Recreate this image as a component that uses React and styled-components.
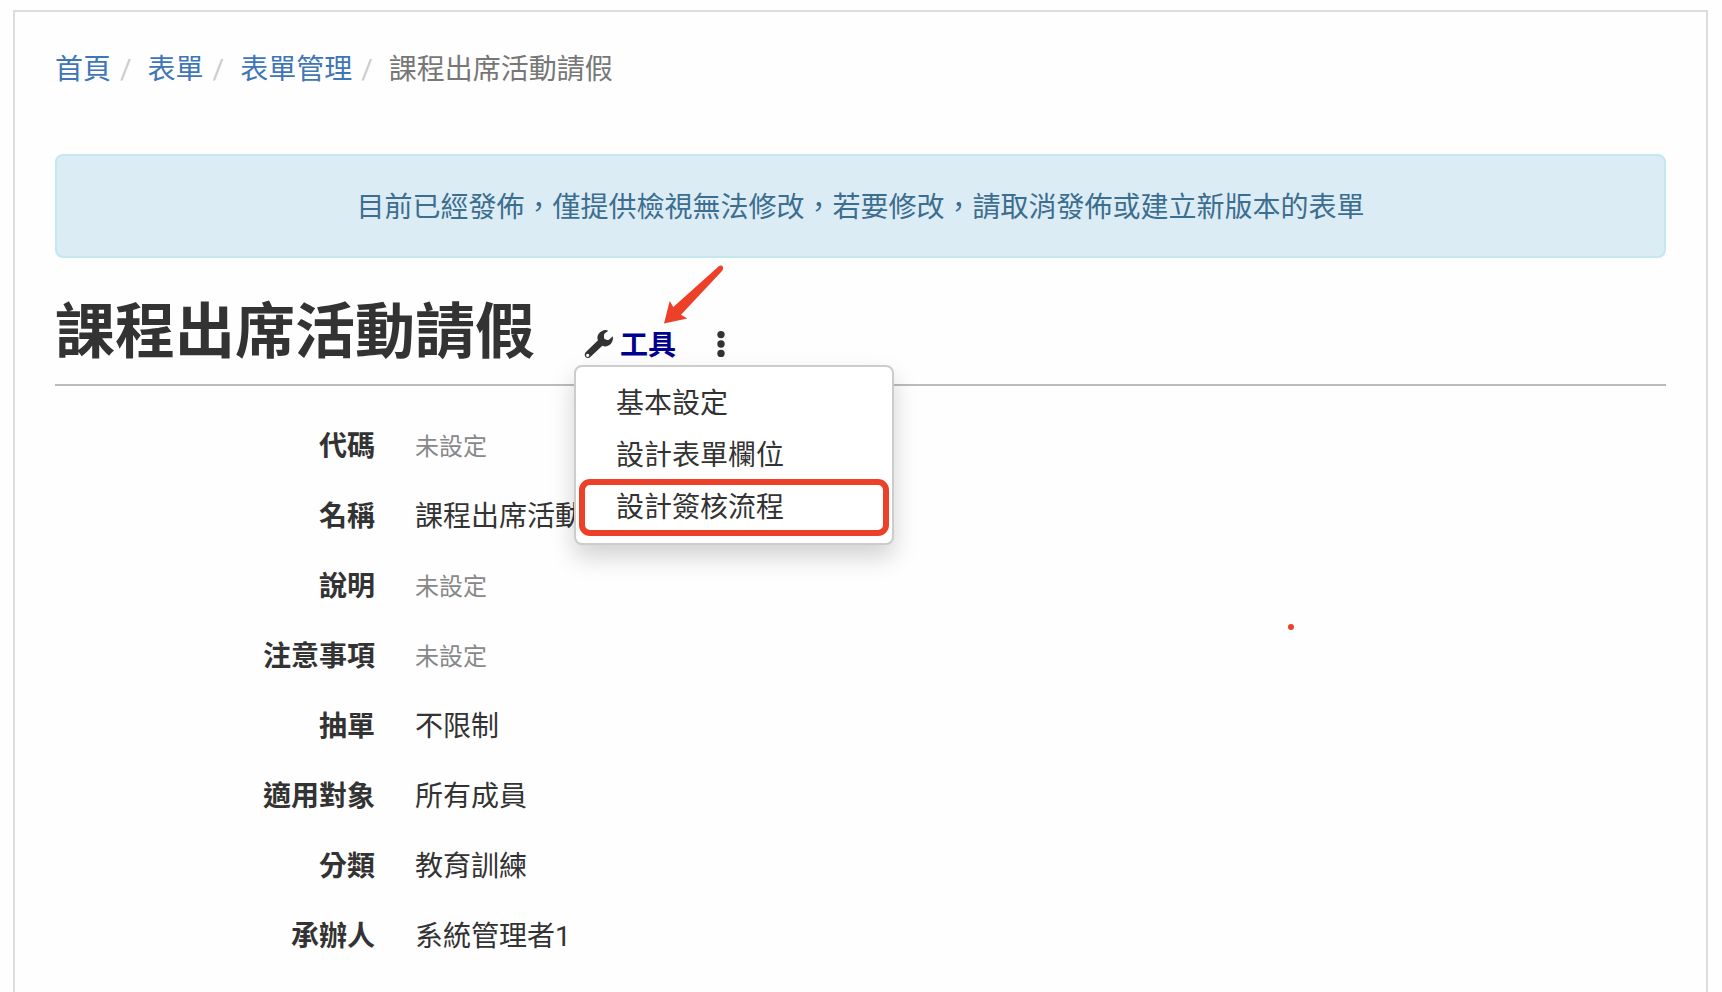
import React from "react";
import styled, { createGlobalStyle } from "styled-components";

const GlobalStyle = createGlobalStyle`
  *, *::before, *::after { box-sizing: border-box; }
  body {
    margin: 0;
    background: #fefefe;
    color: #333;
    font: 28px/40px Roboto, "Noto Sans CJK TC", sans-serif;
  }
`;

const Panel = styled.main`
  position: relative;
  min-height: calc(100vh - 10px);
  margin: 10px 14px 0 13px;
  padding: 38px 40px 0;
  border: 2px solid #ddd;
  border-bottom: 0;
`;

const Breadcrumb = styled.ol`
  display: flex;
  flex-wrap: wrap;
  margin: 0 0 64px;
  padding: 0;
  list-style: none;
`;

const Crumb = styled.li`
  color: #777;

  & + &::before {
    content: "/";
    padding: 0 16px 0 9px;
    color: #ccc;
  }
`;

const CrumbLink = styled.a`
  color: #3f76b5;
  text-decoration: none;
`;

const Alert = styled.div`
  padding: 32px 30px 28px;
  border: 2px solid #c2e8f0;
  border-radius: 8px;
  background: #dcecf5;
  color: #3c6e8f;
  text-align: center;
`;

const Header = styled.header`
  display: flex;
  align-items: flex-end;
  gap: 48px;
  margin-bottom: 41px;
  padding: 42px 0 18px;
  border-bottom: 2px solid #bbb;
`;

const Title = styled.h1`
  margin: 0;
  font-size: 60px;
  line-height: 66px;
  font-weight: 700;
`;

const Tools = styled.div`
  position: relative;
  display: flex;
  align-items: center;
  gap: 40px;
  margin-bottom: 2px;
`;

const ToolLink = styled.a`
  display: flex;
  align-items: center;
  gap: 7px;
  color: #00008f;
  font-weight: 700;
  text-decoration: none;
`;

const ToolLabel = styled.span`
  padding-top: 4px;
  line-height: 36px;
`;

const WrenchIcon = styled.svg`
  width: 30px;
  height: 30px;
  fill: #333;
`;

const MoreButton = styled.button`
  display: flex;
  padding: 0;
  border: 0;
  background: none;
  cursor: pointer;
`;

const DotsIcon = styled.svg`
  width: 10px;
  height: 28px;
  fill: #333;
`;

const Menu = styled.ul`
  position: absolute;
  z-index: 1;
  top: 41px;
  left: -9px;
  min-width: 320px;
  margin: 0;
  padding: 10px 0;
  border: 2px solid #ccc;
  border-radius: 8px;
  background: #fff;
  box-shadow: 0 12px 24px rgba(0, 0, 0, 0.175);
  list-style: none;
`;

const MenuItem = styled.li`
  position: relative;
`;

const MenuLink = styled.a`
  display: block;
  padding: 7px 40px 5px;
  color: #333;
  text-decoration: none;
`;

const Highlight = styled.span`
  position: absolute;
  inset: -2px 3px -3px;
  border: 6px solid #ec4028;
  border-radius: 11px;
  pointer-events: none;
`;

const Arrow = styled.svg`
  position: absolute;
  z-index: 2;
  left: 80px;
  bottom: 39px;
  width: 60px;
  height: 60px;
  fill: #ec4028;
  pointer-events: none;
`;

const Details = styled.dl`
  display: grid;
  grid-template-columns: 320px 1fr;
  gap: 30px 40px;
  margin: 0;
`;

const Term = styled.dt`
  font-weight: 700;
  text-align: right;
`;

const Value = styled.dd`
  margin: 0;
  color: ${({ $unset }) => ($unset ? "#888" : "#333")};
  font-size: ${({ $unset }) => ($unset ? "24px" : "28px")};
`;

const RedDot = styled.span`
  position: absolute;
  top: 612px;
  left: 1273px;
  width: 6px;
  height: 6px;
  border-radius: 50%;
  background: #ec4028;
`;

const crumbs = ["首頁", "表單", "表單管理"];

const menuItems = [
  { label: "基本設定" },
  { label: "設計表單欄位" },
  { label: "設計簽核流程", highlighted: true },
];

const details = [
  ["代碼", null],
  ["名稱", "課程出席活動請假"],
  ["說明", null],
  ["注意事項", null],
  ["抽單", "不限制"],
  ["適用對象", "所有成員"],
  ["分類", "教育訓練"],
  ["承辦人", "系統管理者1"],
];

export default function App() {
  return (
    <>
      <GlobalStyle />
      <Panel lang="zh-TW">
        <nav aria-label="breadcrumb">
          <Breadcrumb>
            {crumbs.map((label) => (
              <Crumb key={label}>
                <CrumbLink href="#">{label}</CrumbLink>
              </Crumb>
            ))}
            <Crumb aria-current="page">課程出席活動請假</Crumb>
          </Breadcrumb>
        </nav>
        <Alert role="status">
          目前已經發佈，僅提供檢視無法修改，若要修改，請取消發佈或建立新版本的表單
        </Alert>
        <Header>
          <Title>課程出席活動請假</Title>
          <Tools>
            <ToolLink href="#" aria-haspopup="menu" aria-expanded="true">
              <WrenchIcon viewBox="3 6 90 90" aria-hidden="true">
                <path
                  fillRule="evenodd"
                  d="M79 11Q70 7 60 12C48 18 43 30 48 40L11 76C5 83 9 93 18 93Q22 93 25 90L61 56C72 62 86 56 91 43Q94 35 92 28L81 38Q78 40 75 39L68 36Q66 35 66 32L66 24Q66 21 69 19ZM17 80a5 5 0 1 1 0 10a5 5 0 1 1 0-10Z"
                />
              </WrenchIcon>
              <ToolLabel>工具</ToolLabel>
            </ToolLink>
            <MoreButton type="button" aria-label="更多">
              <DotsIcon viewBox="0 0 10 28" aria-hidden="true">
                <circle cx="5" cy="4.6" r="3.7" />
                <circle cx="5" cy="14" r="3.7" />
                <circle cx="5" cy="23.4" r="3.7" />
              </DotsIcon>
            </MoreButton>
            <Arrow viewBox="0 0 60 60" aria-hidden="true">
              <path d="M1 58.500L6.700 36 10.300 42 55.500 1.500Q58.500 -0.500 60 2 60.500 4 59 6L18 49.700 24.300 53.500Z" />
            </Arrow>
            <Menu>
              {menuItems.map(({ label, highlighted }) => (
                <MenuItem key={label}>
                  <MenuLink href="#">{label}</MenuLink>
                  {highlighted && <Highlight />}
                </MenuItem>
              ))}
            </Menu>
          </Tools>
        </Header>
        <Details>
          {details.map(([term, value]) => (
            <React.Fragment key={term}>
              <Term>{term}</Term>
              <Value $unset={value === null}>{value ?? "未設定"}</Value>
            </React.Fragment>
          ))}
        </Details>
        <RedDot />
      </Panel>
    </>
  );
}
